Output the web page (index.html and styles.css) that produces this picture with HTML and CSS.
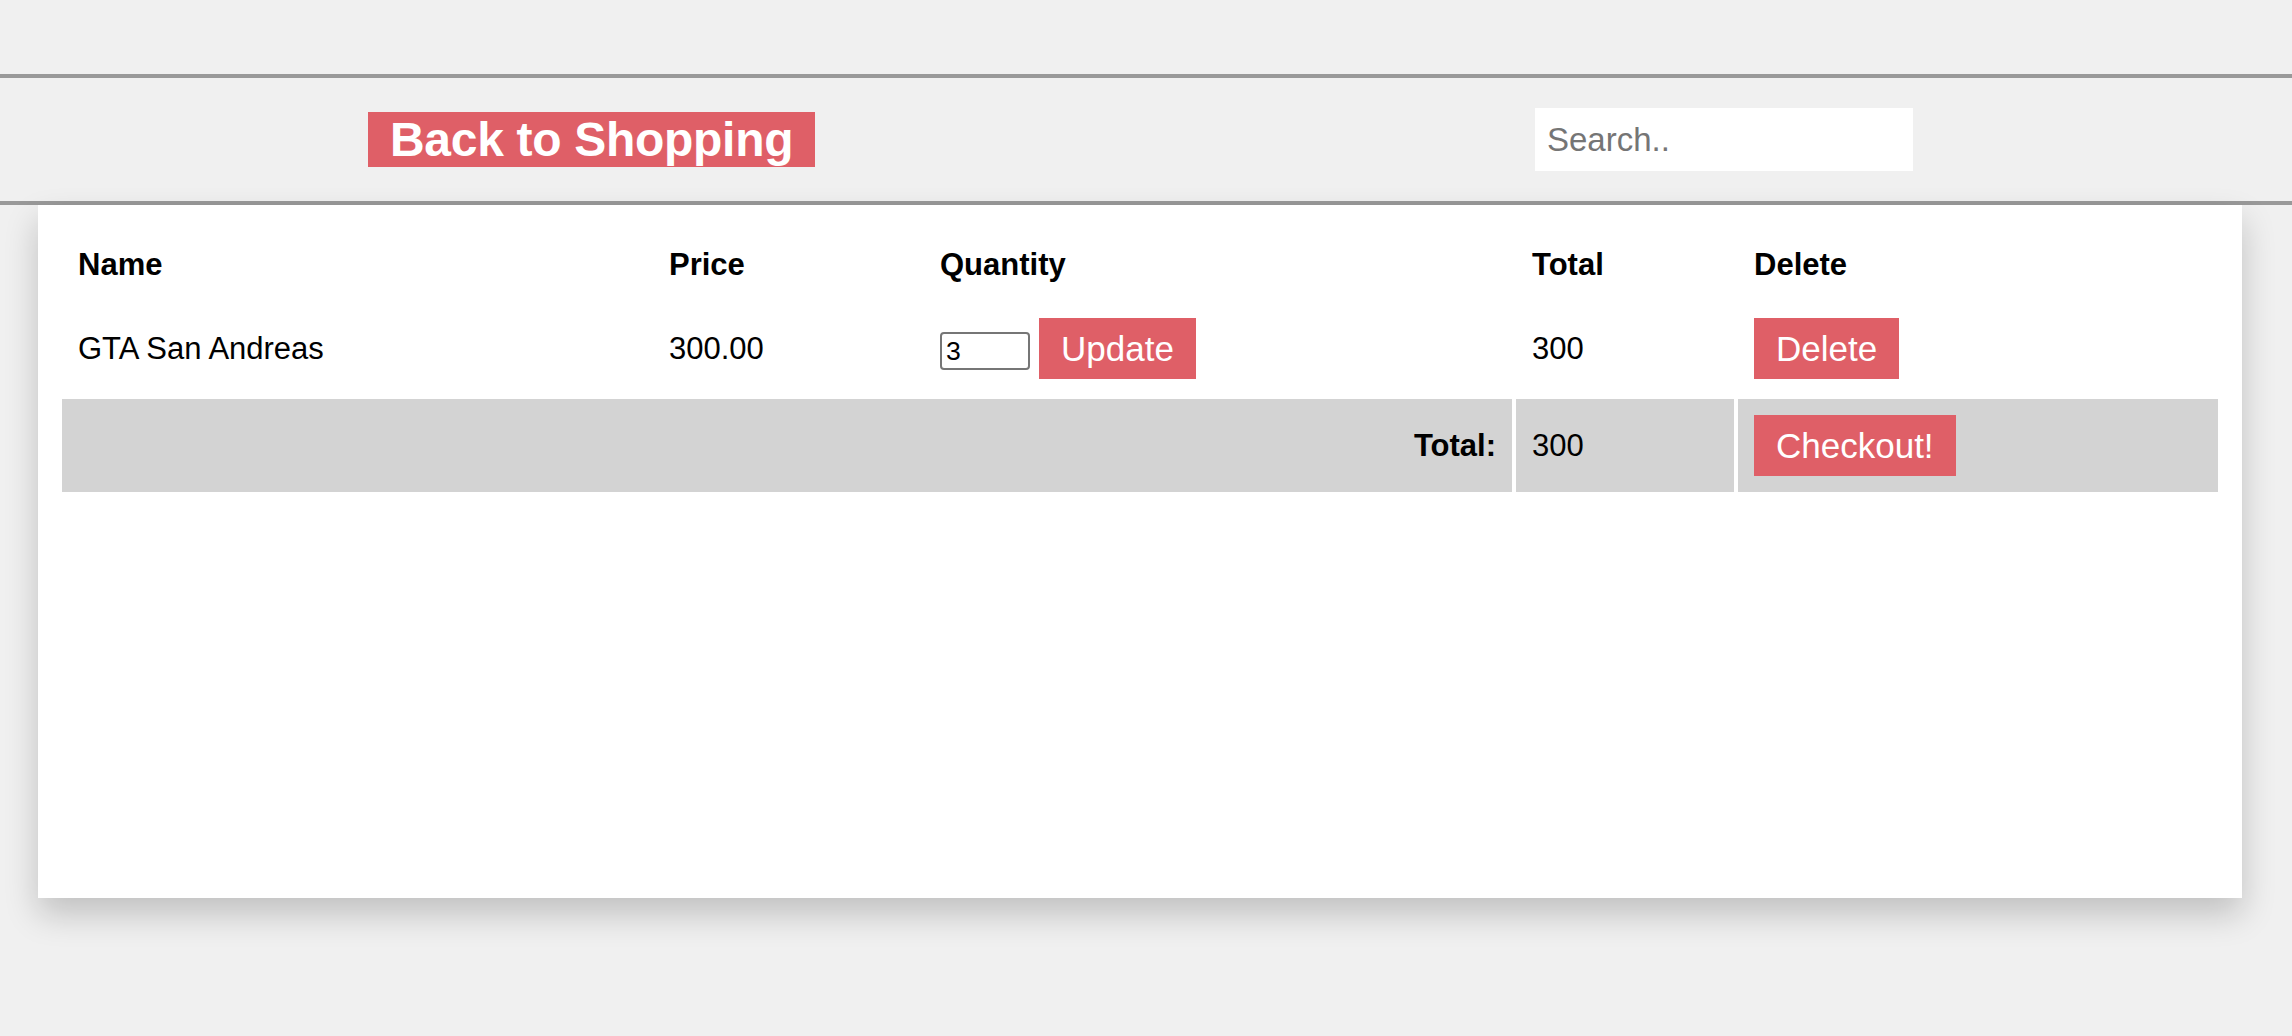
FILE: index.html
```html
<!DOCTYPE html>
<html lang="en">
<head>
<meta charset="utf-8">
<title>Cart</title>
<link rel="stylesheet" href="styles.css">
</head>
<body>
<header class="topbar">
  <a class="back-link" href="#">Back to Shopping</a>
  <input class="search" type="text" placeholder="Search..">
</header>
<main class="card">
  <table class="cart">
    <colgroup>
      <col class="c-name">
      <col class="c-price">
      <col class="c-qty">
      <col class="c-total">
      <col class="c-del">
    </colgroup>
    <thead>
      <tr>
        <th>Name</th>
        <th>Price</th>
        <th>Quantity</th>
        <th>Total</th>
        <th>Delete</th>
      </tr>
    </thead>
    <tbody>
      <tr>
        <td>GTA San Andreas</td>
        <td>300.00</td>
        <td>
          <div class="cell-row">
            <input class="qty" type="text" value="3">
            <button class="btn">Update</button>
          </div>
        </td>
        <td>300</td>
        <td>
          <div class="cell-row">
            <button class="btn">Delete</button>
          </div>
        </td>
      </tr>
      <tr class="sum-row">
        <td colspan="3" class="sum-label">Total:</td>
        <td>300</td>
        <td>
          <div class="cell-row">
            <button class="btn">Checkout!</button>
          </div>
        </td>
      </tr>
    </tbody>
  </table>
</main>
</body>
</html>
```
FILE: styles.css
```css
html, body {
  margin: 0;
  padding: 0;
}

html {
  background: #f0f0f0;
}

body {
  background: #f0f0f0;
  font-family: "Liberation Sans", Arial, Helvetica, sans-serif;
  color: #000;
  min-height: 100vh;
  padding-bottom: 1px;
  box-sizing: border-box;
}

.topbar {
  margin-top: 74px;
  height: 123px;
  border-top: 4px solid #999;
  border-bottom: 4px solid #999;
  display: flex;
  align-items: center;
  justify-content: space-between;
  padding: 0 379px 0 368px;
}

.back-link {
  display: block;
  background: #df5f67;
  color: #fff;
  font-weight: bold;
  font-size: 48px;
  letter-spacing: -0.3px;
  height: 55px;
  line-height: 55px;
  padding: 0 22px;
  text-decoration: none;
}

.search {
  box-sizing: border-box;
  width: 378px;
  height: 63px;
  border: none;
  outline: none;
  background: #fff;
  padding: 0 12px;
  font-family: inherit;
  font-size: 33px;
  color: #000;
}

.search::placeholder {
  color: #757575;
}

.card {
  display: block;
  box-sizing: border-box;
  background: #fff;
  height: 693px;
  margin: 0 50px 80px 38px;
  padding: 23px 20px;
  box-shadow: 0 16px 32px 0 rgba(0, 0, 0, 0.2);
}

.cart {
  width: 100%;
  table-layout: fixed;
  border-spacing: 4px;
  font-size: 31px;
}

.c-name { width: 587px; }
.c-price { width: 267px; }
.c-qty { width: 588px; }
.c-total { width: 218px; }

.cart th {
  text-align: left;
  font-weight: bold;
  padding: 16px;
  line-height: 34px;
}

.cart td {
  padding: 16px;
  line-height: 34px;
  vertical-align: middle;
}

.cell-row {
  display: flex;
  align-items: center;
  gap: 9px;
}

.qty {
  box-sizing: border-box;
  width: 90px;
  height: 38px;
  margin-top: 5px;
  border: 2px solid #767676;
  border-radius: 4px;
  padding: 2px 4px;
  font-family: inherit;
  font-size: 26.6px;
  color: #000;
  background: #fff;
}

.btn {
  background: #df5f67;
  color: #fff;
  border: none;
  height: 61px;
  padding: 0 22px;
  font-family: inherit;
  font-size: 35px;
  cursor: pointer;
}

.sum-row td {
  background: #d3d3d3;
}

.sum-row .sum-label {
  text-align: right;
  font-weight: bold;
}
```
